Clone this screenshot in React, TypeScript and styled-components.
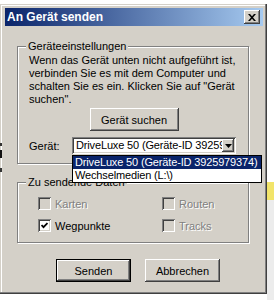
import React from 'react'
import styled, { createGlobalStyle } from 'styled-components'

const FACE = '#d4d0c8'

const GlobalStyle = createGlobalStyle`
  html, body { margin: 0; padding: 0; background: #fff; }
  body { font-family: "Liberation Sans", Arial, sans-serif; font-size: 11px; color: #000; }
`

const raised = `inset -1px -1px #404040, inset 1px 1px #fff, inset -2px -2px #808080, inset 2px 2px ${FACE}`
const sunken = `inset 1px 1px #808080, inset -1px -1px #fff, inset 2px 2px #404040, inset -2px -2px ${FACE}`

const Desktop = styled.div`
  position: relative;
  width: 274px;
  height: 300px;
  overflow: hidden;
  background: #fff;
`

const Scrap = styled.div<{ $x: number; $y: number; $w: number; $h: number; $c: string }>`
  position: absolute;
  left: ${p => p.$x}px;
  top: ${p => p.$y}px;
  width: ${p => p.$w}px;
  height: ${p => p.$h}px;
  background: ${p => p.$c};
  z-index: 3;
`

const Window = styled.div`
  position: absolute;
  left: 0;
  top: 4px;
  width: 267px;
  height: 290px;
  box-sizing: border-box;
  padding: 4px 4px 4px 5px;
  background: ${FACE};
  box-shadow: inset -1px -1px #404040, inset -2px -2px #808080, inset 1px 1px ${FACE}, inset 2px 2px #fff;
  display: flex;
  flex-direction: column;
`

const TitleBar = styled.div`
  height: 18px;
  flex: none;
  display: flex;
  align-items: center;
  justify-content: space-between;
  padding: 0 3px 0 2px;
  background: linear-gradient(to right, #0a246a, #a6caf0);
`

const Title = styled.span`
  color: #fff;
  font-weight: bold;
  font-size: 12px;
  line-height: 18px;
`

const CloseButton = styled.span`
  width: 16px;
  height: 14px;
  background: ${FACE};
  box-shadow: ${raised};
  display: flex;
  align-items: center;
  justify-content: center;
`

const Client = styled.div`
  flex: 1;
  display: flex;
  flex-direction: column;
  padding: 0 14px 0 12px;
`

const GroupBox = styled.fieldset<{ $top: number }>`
  margin: ${p => p.$top}px 0 0 0;
  padding: 0;
  min-width: 0;
  border: 1px solid #808080;
  box-shadow: inset 1px 1px #fff, 1px 1px #fff;
`

const Legend = styled.legend`
  margin-left: 8px;
  padding: 0 2px;
  line-height: 13px;
  background: ${FACE};
`

const GroupBody = styled.div`
  display: flex;
  flex-direction: column;
`

const Intro = styled.p`
  margin: 0;
  padding: 1px 8px 0 11px;
  line-height: 13px;
  white-space: nowrap;
`

const PushButton = styled.button<{ $w: number; $default?: boolean }>`
  width: ${p => p.$w}px;
  height: 23px;
  box-sizing: border-box;
  padding: 0;
  font-family: inherit;
  font-size: 11px;
  color: #000;
  background: ${FACE};
  border: ${p => (p.$default ? '1px solid #000' : 'none')};
  box-shadow: ${raised};
`

const SearchButton = styled(PushButton)`
  align-self: center;
  margin: 2px 0 0 2px;
`

const DeviceRow = styled.div`
  display: flex;
  align-items: center;
  margin: 6px 0 9px;
  padding-left: 11px;
`

const DeviceLabel = styled.span`
  width: 43px;
`

const Combo = styled.div`
  position: relative;
  width: 164px;
  height: 17px;
  box-sizing: border-box;
  padding: 2px;
  display: flex;
  background: #fff;
  box-shadow: ${sunken};
`

const ComboText = styled.span`
  flex: 1;
  overflow: hidden;
  white-space: nowrap;
  padding-left: 2px;
  line-height: 13px;
  letter-spacing: -0.15px;
`

const ComboArrow = styled.span`
  width: 12px;
  height: 13px;
  background: ${FACE};
  box-shadow: ${raised};
  display: flex;
  align-items: center;
  justify-content: center;
`

const DropList = styled.ul`
  position: absolute;
  top: 18px;
  left: 0;
  z-index: 2;
  width: 190px;
  box-sizing: border-box;
  margin: 0;
  padding: 0;
  list-style: none;
  background: #fff;
  border: 1px solid #000;
`

const DropItem = styled.li<{ $selected?: boolean }>`
  padding-left: 2px;
  line-height: 13px;
  white-space: nowrap;
  letter-spacing: -0.15px;
  background: ${p => (p.$selected ? '#0a246a' : '#fff')};
  color: ${p => (p.$selected ? '#fff' : '#000')};
`

const Options = styled.div`
  display: grid;
  grid-template-columns: 124px 1fr;
  row-gap: 9px;
  padding: 8px 0 10px 20px;
`

const Option = styled.label<{ $disabled?: boolean }>`
  display: flex;
  align-items: center;
  height: 13px;
  color: ${p => (p.$disabled ? '#808080' : '#000')};
  text-shadow: ${p => (p.$disabled ? '1px 1px #fff' : 'none')};
`

const CheckBox = styled.span<{ $disabled?: boolean }>`
  width: 13px;
  height: 13px;
  flex: none;
  margin-right: 4px;
  display: flex;
  align-items: center;
  justify-content: center;
  background: ${p => (p.$disabled ? FACE : '#fff')};
  box-shadow: ${sunken};
`

const Footer = styled.div`
  display: flex;
  justify-content: center;
  gap: 14px;
  margin-top: 16px;
  padding-left: 10px;
`

const CloseGlyph = () => (
  <svg width="8" height="7" viewBox="0 0 8 7">
    <path d="M0 0h2l2 2.2L6 0h2L5 3.5 8 7H6L4 4.8 2 7H0l3-3.5z" fill="#000" />
  </svg>
)

const ArrowGlyph = () => (
  <svg width="7" height="4" viewBox="0 0 7 4">
    <polygon points="0,0 7,0 3.5,4" fill="#000" />
  </svg>
)

const CheckGlyph = () => (
  <svg width="7" height="7" viewBox="0 0 7 7">
    <polyline points="0.5,3 2.5,5.2 6.5,1" fill="none" stroke="#000" strokeWidth="1.8" />
  </svg>
)

const Check = ({ label, checked, disabled }: { label: string; checked?: boolean; disabled?: boolean }) => (
  <Option $disabled={disabled}>
    <CheckBox $disabled={disabled}>{checked && <CheckGlyph />}</CheckBox>
    {label}
  </Option>
)

export default function App() {
  return (
    <Desktop>
      <GlobalStyle />
      <Scrap $x={0} $y={143} $w={2} $h={3} $c="#333" />
      <Scrap $x={0} $y={150} $w={2} $h={8} $c="#111" />
      <Scrap $x={0} $y={168} $w={2} $h={4} $c="#333" />
      <Scrap $x={267} $y={182} $w={7} $h={18} $c="#f2e46a" />
      <Scrap $x={267} $y={200} $w={7} $h={100} $c="#ececec" />
      <Window>
        <TitleBar>
          <Title>An Gerät senden</Title>
          <CloseButton><CloseGlyph /></CloseButton>
        </TitleBar>
        <Client>
          <GroupBox $top={14}>
            <Legend>Geräteeinstellungen</Legend>
            <GroupBody>
              <Intro>
                Wenn das Gerät unten nicht aufgeführt ist,<br />
                verbinden Sie es mit dem Computer und<br />
                schalten Sie es ein. Klicken Sie auf "Gerät<br />
                suchen".
              </Intro>
              <SearchButton $w={89}>Gerät suchen</SearchButton>
              <DeviceRow>
                <DeviceLabel>Gerät:</DeviceLabel>
                <Combo>
                  <ComboText>DriveLuxe 50 (Geräte-ID 3925979374)</ComboText>
                  <ComboArrow><ArrowGlyph /></ComboArrow>
                  <DropList>
                    <DropItem $selected>DriveLuxe 50 (Geräte-ID 3925979374)</DropItem>
                    <DropItem>Wechselmedien (L:\)</DropItem>
                  </DropList>
                </Combo>
              </DeviceRow>
            </GroupBody>
          </GroupBox>
          <GroupBox $top={12}>
            <Legend>Zu sendende Daten</Legend>
            <Options>
              <Check label="Karten" disabled />
              <Check label="Routen" disabled />
              <Check label="Wegpunkte" checked />
              <Check label="Tracks" disabled />
            </Options>
          </GroupBox>
          <Footer>
            <PushButton $w={75} $default>Senden</PushButton>
            <PushButton $w={75}>Abbrechen</PushButton>
          </Footer>
        </Client>
      </Window>
    </Desktop>
  )
}
